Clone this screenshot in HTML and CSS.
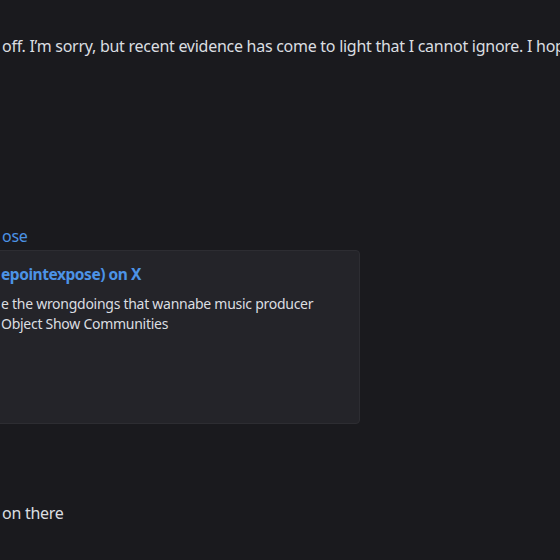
FILE: index.html
```html
<!DOCTYPE html>
<html>
<head>
<meta charset="utf-8">
<link rel="stylesheet" href="styles.css">
</head>
<body>
<div class="chat">
  <p class="msg first">off. I’m sorry, but recent evidence has come to light that I cannot ignore. I hope</p>
  <a class="link">ose</a>
  <div class="embed">
    <div class="embed-title">epointexpose) on X</div>
    <div class="embed-desc">e the wrongdoings that wannabe music producer<br>Object Show Communities</div>
  </div>
  <p class="msg last">on there</p>
</div>
</body>
</html>
```

FILE: styles.css
```css
html, body {
  margin: 0;
  padding: 0;
  background: #1a1a1e;
  width: 560px;
  height: 560px;
  overflow: hidden;
}
.chat {
  font-family: "Noto Sans", "Open Sans", sans-serif;
  color: #dbdee1;
  display: flex;
  flex-direction: column;
  align-items: flex-start;
  padding-left: 2px;
}
.msg {
  margin: 0;
  font-size: 16px;
  line-height: 22px;
  letter-spacing: -0.27px;
  white-space: nowrap;
}
.first {
  margin-top: 35px;
}
.link {
  margin-top: 168px;
  color: #4c93e6;
  font-size: 16px;
  line-height: 22px;
  letter-spacing: -0.3px;
}
.embed {
  margin-top: 3px;
  margin-left: -20px;
  width: 378px;
  height: 174px;
  box-sizing: border-box;
  background: #242429;
  border: 1px solid #2d2d32;
  border-radius: 4px;
  padding: 12px 16px 16px 18px;
}
.embed-title {
  color: #4c93e6;
  font-weight: 700;
  font-size: 15.5px;
  line-height: 22px;
  letter-spacing: -0.45px;
}
.embed-desc {
  margin-top: 9px;
  font-size: 14px;
  line-height: 20px;
  letter-spacing: -0.27px;
  color: #dbdee1;
}
.last {
  margin-top: 78px;
}
```
